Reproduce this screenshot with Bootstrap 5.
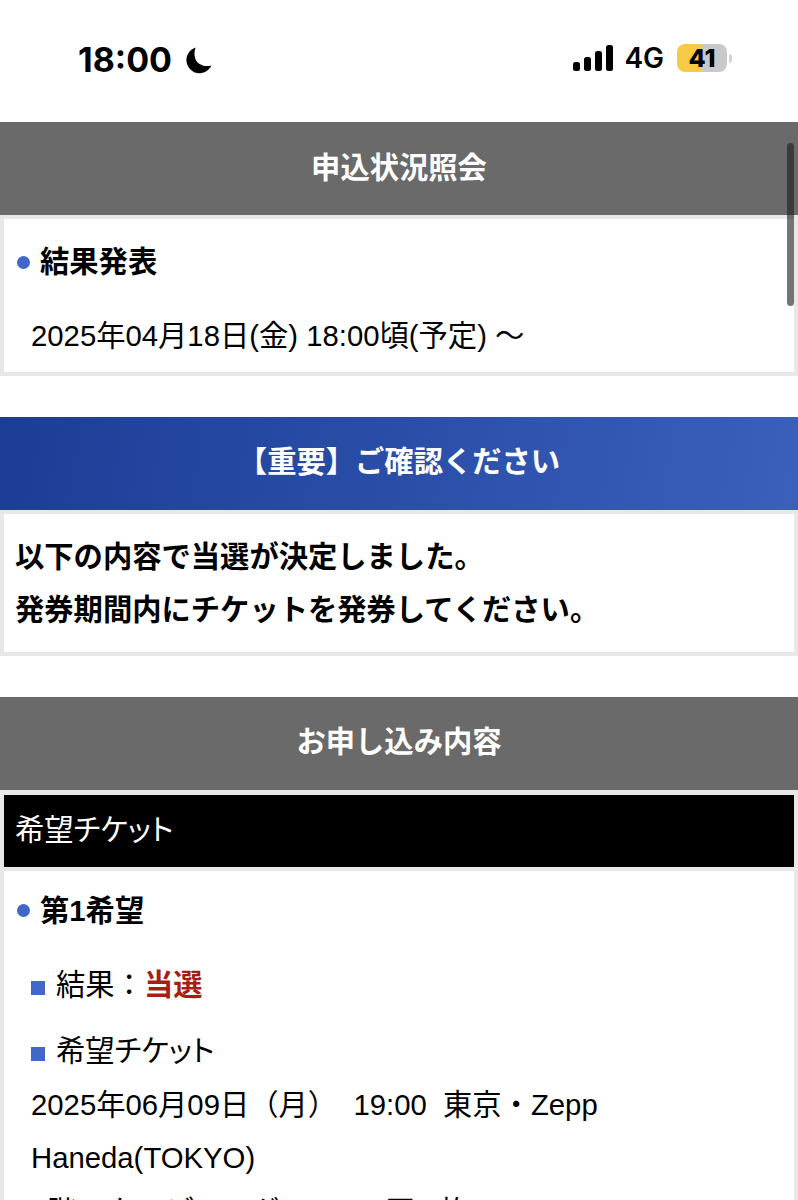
<!DOCTYPE html>
<html lang="ja">
<head>
<meta charset="utf-8">
<link href="https://cdn.jsdelivr.net/npm/bootstrap@5.3.0/dist/css/bootstrap.min.css" rel="stylesheet">
<style>
html,body{height:1200px;overflow:hidden}
body{font-family:"Liberation Sans","Noto Sans CJK JP",sans-serif;color:#000;background:#fff;position:relative}
.status-bar{height:122px;padding:43px 66px 0 78px}
.clock{font-family:Inter,"Liberation Sans",sans-serif;font-size:34px;font-weight:700;line-height:34px;gap:13px}
.net{font-family:Inter,"Liberation Sans",sans-serif;font-size:28px;font-weight:600;line-height:30px;margin:0 13px 0 11px}
.batt{width:50px;height:28px;border-radius:8px;background:linear-gradient(90deg,#f6ca45 0 48%,#c9c9c9 48%);font-family:Inter,"Liberation Sans",sans-serif;font-size:25px;font-weight:800;line-height:28px;text-align:center}
.batt-cap{width:3px;height:9px;background:#d2d2d2;border-radius:0 3px 3px 0;margin-left:2px}
.sec-head{height:93px;background:#6a6a6a;color:#fff;font-size:29.3px;font-weight:700;display:flex;align-items:center;justify-content:center;padding-bottom:2px}
.sec-head.blue{background:linear-gradient(100deg,#1b3d96,#3a60bb)}
.box{border:4px solid #e8e8e8;background:#fff}
.box-a{margin-bottom:41px;padding:23px 0 9px}
.box-b{margin-bottom:41px;padding:16px 11px 16px}
.box-c{border-top-width:5px}
.box-d{border-top:0;padding-top:20px}
.h-dot{font-size:29.3px;font-weight:700;line-height:40px;display:flex;align-items:center}
.h-dot::before{content:"";width:13px;height:13px;border-radius:50%;background:#4267c8;margin-left:13px;margin-right:10px}
.txt{font-size:29.3px;line-height:53.5px;padding-left:27px}
.tx-lead{margin-top:27px}
.tx-next{margin-top:13px}
.notice{font-size:29.3px;font-weight:700;line-height:53px}
.black-bar{height:72px;background:#000;color:#fff;font-size:29.300px;line-height:70px;padding-left:11px}
.prop{font-feature-settings:"palt"}
.sq{display:inline-block;width:14px;height:14px;background:#4267c8;margin-right:11px;vertical-align:0}
.won{color:#a81e14;font-weight:700}
.scroll-thumb{position:absolute;top:143px;right:4px;width:7px;height:163px;border-radius:4px;background:rgba(30,30,30,.62)}
</style>
</head>
<body>
<div class="status-bar d-flex justify-content-between align-items-start">
  <div class="d-flex align-items-center clock">18:00
    <svg width="27" height="27" viewBox="0 0 28 28"><path d="M11 .5C5 2.500 1 8.500 1.500 14.500 2.100 22 8.500 27.500 15.500 27.300 20.500 27.200 25 24 27.500 19.300 20.500 21 13.500 18.500 11 13 9.300 9 9.500 4.500 11 .5Z" fill="#000"/></svg>
  </div>
  <div class="d-flex align-items-center">
    <svg width="40" height="26" viewBox="0 0 40 26" fill="#000"><rect x="0" y="17" width="7" height="9" rx="2.500"/><rect x="11" y="12" width="7" height="14" rx="2.500"/><rect x="22" y="6" width="7" height="20" rx="2.500"/><rect x="33" y="0" width="7" height="26" rx="2.500"/></svg>
    <span class="net">4G</span>
    <span class="batt">41</span><span class="batt-cap"></span>
  </div>
</div>

<div class="sec-head">申込状況照会</div>
<div class="box box-a">
  <div class="h-dot">結果発表</div>
  <div class="txt tx-lead">2025年04月18日(金) 18:00頃(予定) 〜</div>
</div>

<div class="sec-head blue">【重要】ご確認ください</div>
<div class="box box-b">
  <div class="notice">以下の内容で当選が決定しました。<br>発券期間内にチケットを発券してください。</div>
</div>

<div class="sec-head">お申し込み内容</div>
<div class="box box-c">
  <div class="black-bar prop">希望チケット</div>
</div>
<div class="box box-d">
  <div class="h-dot">第1希望</div>
  <div class="txt tx-lead"><span class="sq"></span>結果：<span class="won">当選</span></div>
  <div class="txt tx-next"><span class="sq"></span><span class="prop">希望チケット</span><br>2025年06月09日（月）&nbsp;&nbsp;19:00&nbsp;&nbsp;東京・Zepp Haneda(TOKYO)<br>1階スタンディング&nbsp;&nbsp;&nbsp;&nbsp;7,700円 1枚</div>
</div>
<div class="scroll-thumb"></div>
<script src="https://cdn.jsdelivr.net/npm/bootstrap@5.3.0/dist/js/bootstrap.bundle.min.js"></script>
</body>
</html>
